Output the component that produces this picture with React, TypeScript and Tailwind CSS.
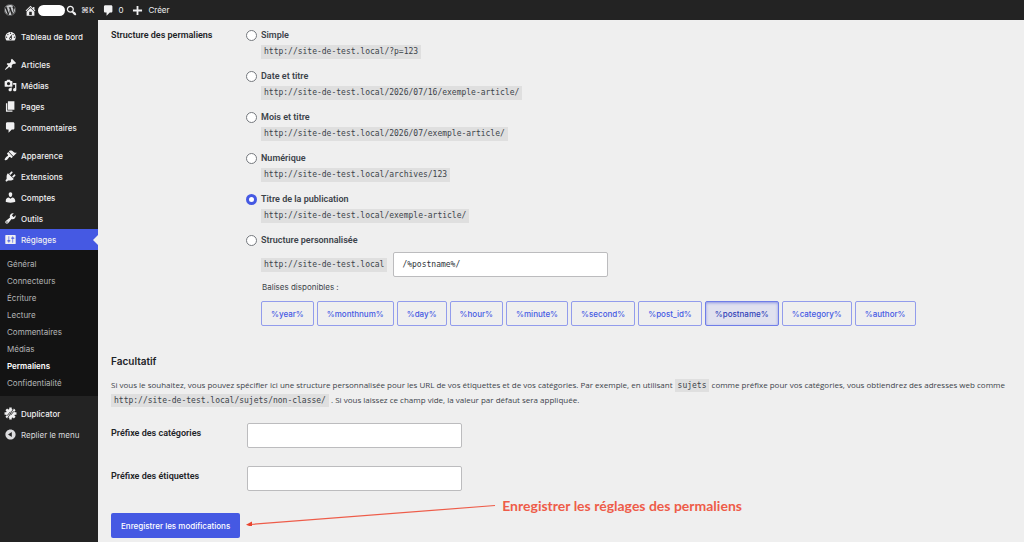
import { useState } from "react";
import type { ReactNode } from "react";
import { FaWordpress } from "react-icons/fa";

const ICONS = {
  dashboard:
    "M3.76 16h12.48c1.1-1.37 1.76-3.11 1.76-5 0-4.42-3.58-8-8-8s-8 3.58-8 8c0 1.89.66 3.63 1.76 5zM10 4c.55 0 1 .45 1 1s-.45 1-1 1-1-.45-1-1 .45-1 1-1zM6 6c.55 0 1 .45 1 1s-.45 1-1 1-1-.45-1-1 .45-1 1-1zm8 0c.55 0 1 .45 1 1s-.45 1-1 1-1-.45-1-1 .45-1 1-1zm-5.37 5.55L12 7v6c0 1.1-.9 2-2 2s-2-.9-2-2c0-.57.24-1.08.63-1.45zM4 10c.55 0 1 .45 1 1s-.45 1-1 1-1-.45-1-1 .45-1 1-1zm12 0c.55 0 1 .45 1 1s-.45 1-1 1-1-.45-1-1 .45-1 1-1zm-5 3c0-.55-.45-1-1-1s-1 .45-1 1 .45 1 1 1 1-.45 1-1z",
  post: "M10.44 3.02l1.82-1.82 6.36 6.35-1.83 1.82c-1.05-.68-2.48-.57-3.41.36l-.75.75c-.92.93-1.04 2.35-.35 3.41l-1.83 1.82-2.41-2.41-2.8 2.79c-.42.42-3.38 2.71-3.8 2.29s1.86-3.39 2.28-3.81l2.79-2.79L4.1 9.36l1.83-1.82c1.05.69 2.48.57 3.4-.36l.75-.75c.93-.92 1.05-2.35.36-3.41z",
  media:
    "M13 11V4c0-.55-.45-1-1-1h-1.67L9 1H5L3.67 3H2c-.55 0-1 .45-1 1v7c0 .55.45 1 1 1h10c.55 0 1-.45 1-1zM7 4.5c1.38 0 2.5 1.12 2.5 2.5S8.38 9.5 7 9.5 4.5 8.38 4.5 7 5.62 4.5 7 4.5zM14 6h5v10.5c0 1.38-1.12 2.5-2.5 2.5S14 17.88 14 16.5s1.12-2.5 2.5-2.5c.17 0 .34.02.5.05V9h-3V6zm-4 8.05V13h2v3.5c0 1.38-1.12 2.5-2.5 2.5S7 17.88 7 16.5 8.12 14 9.5 14c.17 0 .34.02.5.05z",
  page: "M6 15V2h10v13H6zm-1 1h8v2H3V5h2v11z",
  comments:
    "M5 2h9c1.1 0 2 .9 2 2v7c0 1.1-.9 2-2 2h-2l-5 5v-5H5c-1.1 0-2-.9-2-2V4c0-1.1.9-2 2-2z",
  appearance:
    "M14.48 11.06L7.41 3.99l1.5-1.5c.5-.56 2.3-.47 3.51.32 1.21.8 1.43 1.28 2.91 2.1 1.18.64 2.45 1.26 4.45.85zm-.71.71L6.7 4.7 4.93 6.47c-.39.39-.39 1.02 0 1.41l1.06 1.06c.39.39.39 1.03 0 1.42-.6.6-1.43 1.11-2.21 1.69-.35.26-.7.53-1.01.84C1.43 14.23.4 16.08 1.4 17.07c.99 1 2.84-.03 4.18-1.36.31-.31.58-.66.85-1.02.57-.78 1.08-1.61 1.69-2.21.39-.39 1.02-.39 1.41 0l1.06 1.06c.39.39 1.02.39 1.41 0z",
  plugins:
    "M13.11 4.36L9.87 7.6 8 5.73l3.24-3.24c.35-.34 1.05-.2 1.56.32.52.51.66 1.21.31 1.55zm-8 1.77l.91-1.12 9.01 9.01-1.19.84c-.71.71-2.63 1.16-3.82 1.16H6.14L4.9 17.26c-.59.59-1.54.59-2.12 0-.59-.58-.59-1.53 0-2.12l1.24-1.24v-3.88c0-1.13.4-3.19 1.09-3.89zm7.26 3.97l3.24-3.24c.34-.35 1.04-.21 1.55.31.52.51.66 1.21.31 1.55l-3.24 3.25z",
  users:
    "M10 9.25c-2.27 0-2.73-3.44-2.73-3.44C7 4.02 7.82 2 9.97 2c2.16 0 2.98 2.02 2.71 3.81 0 0-.41 3.44-2.68 3.44zm0 2.57L12.72 10c2.39 0 4.52 2.33 4.52 4.53v2.49s-3.65 1.13-7.24 1.13c-3.65 0-7.24-1.13-7.24-1.13v-2.49c0-2.25 1.94-4.48 4.47-4.48z",
  tools:
    "M16.68 9.77c-1.34 1.34-3.3 1.67-4.95.99l-5.41 6.52c-.99.99-2.59.99-3.58 0s-.99-2.59 0-3.57l6.52-5.42c-.68-1.65-.35-3.61.99-4.95 1.28-1.28 3.12-1.62 4.72-1.06l-2.89 2.89 2.82 2.82 2.86-2.87c.53 1.58.18 3.39-1.08 4.65zM3.81 16.21c.4.39 1.04.39 1.43 0 .4-.4.4-1.04 0-1.43-.39-.4-1.03-.4-1.43 0-.39.39-.39 1.03 0 1.43z",
  settings:
    "M18 16V4c0-.55-.45-1-1-1H3c-.55 0-1 .45-1 1v12c0 .55.45 1 1 1h14c.55 0 1-.45 1-1zM8 11h1c.55 0 1 .45 1 1s-.45 1-1 1H8v1.5c0 .28-.22.5-.5.5s-.5-.22-.5-.5V13H6c-.55 0-1-.45-1-1s.45-1 1-1h1V5.5c0-.28.22-.5.5-.5s.5.22.5.5V11zm5-2h-1c-.55 0-1-.45-1-1s.45-1 1-1h1V5.5c0-.28.22-.5.5-.5s.5.22.5.5V7h1c.55 0 1 .45 1 1s-.45 1-1 1h-1v5.5c0 .28-.22.5-.5.5s-.5-.22-.5-.5V9z",
  home: "M16 8.5l1.53 1.53-1.06 1.06L10 4.6l-6.47 6.49-1.06-1.06L10 2.5l4 4v-2h2v4zm-6-2.46l6 5.99V18H4v-5.97zM12 17v-5H8v5h4z",
  search:
    "M12.14 4.18c1.87 1.87 2.11 4.75.72 6.89.12.1.22.21.36.31.2.16.47.36.81.59.34.24.56.39.66.47.42.31.73.57.94.78.32.32.6.65.84 1 .25.35.44.69.59 1.04.14.35.21.68.18 1-.02.32-.14.59-.36.81s-.49.34-.81.36c-.31.02-.65-.04-.99-.19-.35-.14-.7-.34-1.04-.59-.35-.24-.68-.52-1-.84-.21-.21-.47-.52-.77-.93-.1-.13-.25-.35-.47-.66-.22-.32-.4-.57-.56-.78-.16-.2-.29-.35-.44-.5-2.07 1.09-4.69.76-6.44-.98-2.14-2.15-2.14-5.64 0-7.78 2.15-2.15 5.63-2.15 7.78 0zm-1.41 6.36c1.36-1.37 1.36-3.58 0-4.95-1.37-1.37-3.59-1.37-4.95 0-1.37 1.37-1.37 3.58 0 4.95 1.36 1.37 3.58 1.37 4.95 0z",
  plus: "M17 8.6v2.8h-5.6V17H8.6v-5.6H3V8.6h5.6V3h2.8v5.6z",
  collapse:
    "M10 2.16c4.33 0 7.84 3.51 7.84 7.84s-3.51 7.84-7.84 7.84S2.16 14.33 2.16 10 5.71 2.16 10 2.16zm2 11.72V6.12L6.18 9.97z",
};

type IconName = keyof typeof ICONS;

function Dashicon({ name }: { name: IconName }) {
  return (
    <svg viewBox="0 0 20 20" className="size-[13px] shrink-0 fill-current" fillRule="evenodd" aria-hidden="true">
      <path d={ICONS[name]} />
    </svg>
  );
}

function DuplicatorIcon() {
  return (
    <svg viewBox="0 0 20 20" className="size-[13px] shrink-0" aria-hidden="true">
      <g stroke="currentColor" strokeWidth="3.8">
        <path d="M10 .8v18.4M.8 10h18.4M3.5 3.5l13 13M3.5 16.5l13-13" />
      </g>
      <circle cx="10" cy="10" r="6.8" fill="currentColor" />
      <path d="M4.8 13.4l5-6M15.2 6.6l-5 6M5.4 17.4L14.6 2.6" stroke="#232323" strokeWidth="1.3" fill="none" />
    </svg>
  );
}

const MENU: { label: string; icon: IconName }[][] = [
  [{ label: "Tableau de bord", icon: "dashboard" }],
  [
    { label: "Articles", icon: "post" },
    { label: "Médias", icon: "media" },
    { label: "Pages", icon: "page" },
    { label: "Commentaires", icon: "comments" },
  ],
  [
    { label: "Apparence", icon: "appearance" },
    { label: "Extensions", icon: "plugins" },
    { label: "Comptes", icon: "users" },
    { label: "Outils", icon: "tools" },
    { label: "Réglages", icon: "settings" },
  ],
];

const SUBMENU = [
  "Général",
  "Connecteurs",
  "Écriture",
  "Lecture",
  "Commentaires",
  "Médias",
  "Permaliens",
  "Confidentialité",
];

const STRUCTURES = [
  { id: "simple", label: "Simple", url: "http://site-de-test.local/?p=123" },
  { id: "date", label: "Date et titre", url: "http://site-de-test.local/2026/07/16/exemple-article/" },
  { id: "mois", label: "Mois et titre", url: "http://site-de-test.local/2026/07/exemple-article/" },
  { id: "numerique", label: "Numérique", url: "http://site-de-test.local/archives/123" },
  { id: "titre", label: "Titre de la publication", url: "http://site-de-test.local/exemple-article/" },
];

const TAGS = ["year", "monthnum", "day", "hour", "minute", "second", "post_id", "postname", "category", "author"];

function AdminBar() {
  return (
    <header className="flex h-5 items-center bg-[#232323] pl-1 text-[8px] text-[#f0f0f1]">
      <a href="#" aria-label="WordPress">
        <FaWordpress className="size-3 text-[#c8cacc]" />
      </a>
      <a href="#" aria-label="Site" className="ml-2 flex items-center gap-px">
        <Dashicon name="home" />
        <span className="h-[11px] w-[27px] rounded-full bg-white" />
      </a>
      <button type="button" className="flex items-center gap-[3px]">
        <Dashicon name="search" />
        <span className="font-['Inter','DejaVu_Sans',sans-serif]">⌘K</span>
      </button>
      <a href="#" className="ml-2 flex items-center gap-[3px]">
        <Dashicon name="comments" />
        <span>0</span>
      </a>
      <a href="#" className="ml-2 flex items-center gap-1">
        <Dashicon name="plus" />
        <span>Créer</span>
      </a>
    </header>
  );
}

function MenuRow({ label, icon, current }: { label: string; icon: ReactNode; current?: boolean }) {
  return (
    <a
      href="#"
      className={`flex h-[21px] items-center gap-1 pl-1 font-medium text-[#f0f0f1] ${current ? "bg-[#4559e3]" : ""}`}
    >
      {icon}
      <span>{label}</span>
      {current && <span className="ml-auto border-y-[5px] border-r-[5px] border-y-transparent border-r-[#efefef]" />}
    </a>
  );
}

function Sidebar() {
  return (
    <nav className="flex w-[98px] shrink-0 flex-col gap-[7px] bg-[#232323] pt-1.5 text-[8px] leading-3">
      {MENU.map((group, i) => (
        <div key={i}>
          {group.map((item) => (
            <MenuRow
              key={item.label}
              label={item.label}
              icon={<Dashicon name={item.icon} />}
              current={item.label === "Réglages"}
            />
          ))}
          {i === MENU.length - 1 && (
            <ul className="bg-[#131313] py-[5px]">
              {SUBMENU.map((label) => (
                <li key={label} className="flex h-[17px] items-center pl-[7px]">
                  <a href="#" className={label === "Permaliens" ? "font-semibold text-white" : "text-[#b4b5b6]"}>
                    {label}
                  </a>
                </li>
              ))}
            </ul>
          )}
        </div>
      ))}
      <div>
        <MenuRow label="Duplicator" icon={<DuplicatorIcon />} />
        <button type="button" className="flex h-[21px] w-full items-center gap-1 pl-1 text-[#dcdcde]">
          <Dashicon name="collapse" />
          <span>Replier le menu</span>
        </button>
      </div>
    </nav>
  );
}

function Code({ children }: { children: ReactNode }) {
  return (
    <code className="bg-[#dfdfdf] px-[3px] py-0.5 font-['DejaVu_Sans_Mono',monospace] text-[8px] leading-[10px] text-[#3c434a]">
      {children}
    </code>
  );
}

function StructureRadio({
  id,
  label,
  selected,
  onSelect,
}: {
  id: string;
  label: string;
  selected: string;
  onSelect: (id: string) => void;
}) {
  return (
    <div className="flex h-4 items-center gap-1">
      <input
        type="radio"
        id={id}
        name="structure"
        checked={selected === id}
        onChange={() => onSelect(id)}
        className="size-[11px] shrink-0 appearance-none rounded-full border border-[#75797e] bg-white checked:border-3 checked:border-[#4559e3]"
      />
      <label htmlFor={id} className="font-['Roboto',sans-serif] text-[9px] font-semibold text-[#3c434a]">
        {label}
      </label>
    </div>
  );
}

function PrefixField({ id, label }: { id: string; label: string }) {
  return (
    <div className="flex">
      <label
        htmlFor={id}
        className="w-[136px] shrink-0 pt-1 font-['Roboto',sans-serif] text-[9px] font-semibold text-[#1d2327]"
      >
        {label}
      </label>
      <input id={id} type="text" className="h-[25px] w-[215px] rounded-xs border border-[#bcbcbe] bg-white px-2" />
    </div>
  );
}

export default function App() {
  const [selected, setSelected] = useState("titre");
  const [custom, setCustom] = useState("/%postname%/");

  return (
    <div className="flex min-h-screen flex-col bg-[#efefef] font-['Inter',sans-serif]">
      <AdminBar />
      <div className="flex flex-1">
        <Sidebar />
        <main className="min-w-0 flex-1 pt-[7px] pr-2 pb-1 pl-[13px] text-[8px] leading-3 text-[#3c434a]">
          <section className="flex" role="radiogroup" aria-labelledby="structure-title">
            <h2
              id="structure-title"
              className="w-[135px] shrink-0 pt-0.5 font-['Roboto',sans-serif] text-[9px] font-semibold text-[#1d2327]"
            >
              Structure des permaliens
            </h2>
            <div className="flex min-w-0 flex-1 flex-col gap-[9px]">
              {STRUCTURES.map((s) => (
                <div key={s.id}>
                  <StructureRadio id={s.id} label={s.label} selected={selected} onSelect={setSelected} />
                  <p className="flex h-4 items-end pl-[15px]">
                    <Code>{s.url}</Code>
                  </p>
                </div>
              ))}
              <div>
                <StructureRadio
                  id="custom"
                  label="Structure personnalisée"
                  selected={selected}
                  onSelect={setSelected}
                />
                <div className="flex items-center gap-1.5 pt-1 pl-[15px]">
                  <Code>http://site-de-test.local</Code>
                  <input
                    type="text"
                    aria-label="Structure personnalisée"
                    value={custom}
                    onChange={(e) => setCustom(e.target.value)}
                    className="h-[25px] w-[215px] rounded-xs border border-[#bcbcbe] bg-white px-2 font-['DejaVu_Sans_Mono',monospace] text-[#2c3338]"
                  />
                </div>
                <p className="pt-1 pl-4">Balises disponibles :</p>
                <div className="flex flex-wrap gap-[3px] pt-2 pl-[15px]">
                  {TAGS.map((tag) => (
                    <button
                      key={tag}
                      type="button"
                      onClick={() => setCustom(`/%${tag}%/`)}
                      className={`h-[25px] rounded-xs border px-[9px] font-medium ${
                        custom.includes(`%${tag}%`)
                          ? "border-[#6f7de8] bg-[#e0e1ef] text-[#3041b8] inset-shadow-[0_1px_3px_#8d97e4]"
                          : "border-[#929cec] text-[#4559e3]"
                      }`}
                    >
                      %{tag}%
                    </button>
                  ))}
                </div>
              </div>
            </div>
          </section>

          <h2 className="pt-[27px] text-[10px] leading-4 font-semibold text-[#1d2327]">Facultatif</h2>
          <p className="pt-2 font-['Open_Sans',sans-serif] leading-[15px]">
            Si vous le souhaitez, vous pouvez spécifier ici une structure personnalisée pour les URL de vos étiquettes
            et de vos catégories. Par exemple, en utilisant <Code>sujets</Code> comme préfixe pour vos catégories, vous
            obtiendrez des adresses web comme <Code>http://site-de-test.local/sujets/non-classe/</Code> . Si vous
            laissez ce champ vide, la valeur par défaut sera appliquée.
          </p>

          <div className="flex flex-col gap-[18px] pt-4">
            <PrefixField id="category_base" label="Préfixe des catégories" />
            <PrefixField id="tag_base" label="Préfixe des étiquettes" />
          </div>

          <div className="flex gap-1.5 pt-[7px]">
            <button type="submit" className="mt-[15px] h-[25px] rounded-xs bg-[#4559e3] px-2.5 font-medium text-white">
              Enregistrer les modifications
            </button>
            <svg viewBox="0 0 250 24" className="mt-1 h-6 w-[250px] shrink-0" aria-hidden="true">
              <path d="M4 22.5L249 3.5" stroke="#ee5c49" strokeWidth="1.2" />
              <path d="M0 22.8L6 19.6V25z" fill="#e9452f" />
            </svg>
            <p className="font-['Lato',sans-serif] text-[14px] leading-4 font-bold text-[#ee5c49]">
              Enregistrer les réglages des permaliens
            </p>
          </div>
        </main>
      </div>
    </div>
  );
}
